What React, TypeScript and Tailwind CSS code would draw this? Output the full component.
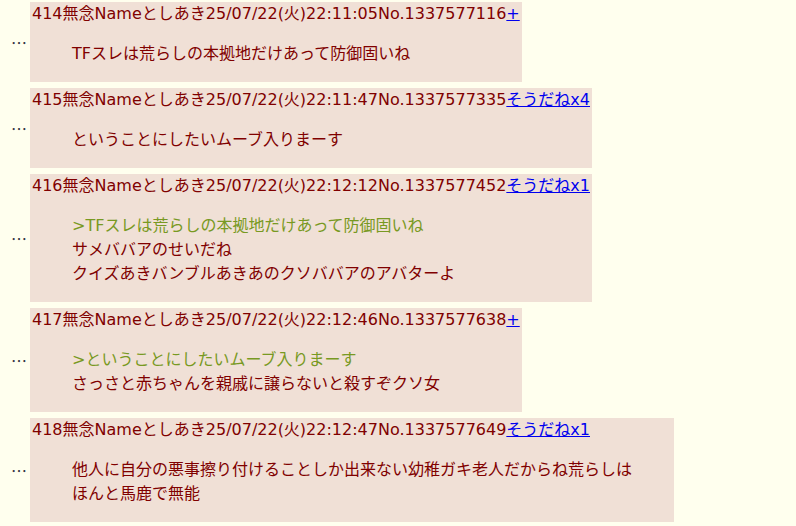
const posts = [
  {
    no: "414",
    time: "25/07/22(火)22:11:05",
    id: "1337577116",
    sod: "+",
    lines: [{ text: "TFスレは荒らしの本拠地だけあって防御固いね" }],
  },
  {
    no: "415",
    time: "25/07/22(火)22:11:47",
    id: "1337577335",
    sod: "そうだねx4",
    lines: [{ text: "ということにしたいムーブ入りまーす" }],
  },
  {
    no: "416",
    time: "25/07/22(火)22:12:12",
    id: "1337577452",
    sod: "そうだねx1",
    lines: [
      { text: ">TFスレは荒らしの本拠地だけあって防御固いね", quote: true },
      { text: "サメババアのせいだね" },
      { text: "クイズあきバンブルあきあのクソババアのアバターよ" },
    ],
  },
  {
    no: "417",
    time: "25/07/22(火)22:12:46",
    id: "1337577638",
    sod: "+",
    lines: [
      { text: ">ということにしたいムーブ入りまーす", quote: true },
      { text: "さっさと赤ちゃんを親戚に譲らないと殺すぞクソ女" },
    ],
  },
  {
    no: "418",
    time: "25/07/22(火)22:12:47",
    id: "1337577649",
    sod: "そうだねx1",
    lines: [
      { text: "他人に自分の悪事擦り付けることしか出来ない幼稚ガキ老人だからね荒らしは" },
      { text: "ほんと馬鹿で無能" },
    ],
  },
];

export default function App() {
  return (
    <div
      className="min-h-[526px] w-[796px] bg-[#ffffee] pt-[2px] text-[16px] leading-6 text-[#800000]"
      style={{ fontFamily: '"DejaVu Sans", "Noto Sans CJK JP", sans-serif' }}
    >
      <div className="flex flex-col gap-[6px]">
        {posts.map((p) => (
          <div key={p.no} className="flex items-center">
            {/* dots cell */}
            <div
              className="w-[30px] pl-[11px] text-[#333344]"
              style={{ fontFamily: '"Noto Sans CJK JP", sans-serif' }}
            >
              …
            </div>
            <div className="w-fit bg-[#f0e0d6] px-[2px]">
              <div className="whitespace-nowrap">
                {p.no}無念Nameとしあき{p.time}No.{p.id}
                <a href="#" className="text-[#0000ee] underline">
                  {p.sod}
                </a>
              </div>
              <div className="mx-10 mt-[16px] mb-[16px]">
                {p.lines.map((l, i) => (
                  <div
                    key={i}
                    className={l.quote ? "whitespace-nowrap text-[#789922]" : "whitespace-nowrap"}
                  >
                    {l.text}
                  </div>
                ))}
              </div>
            </div>
          </div>
        ))}
      </div>
    </div>
  );
}
